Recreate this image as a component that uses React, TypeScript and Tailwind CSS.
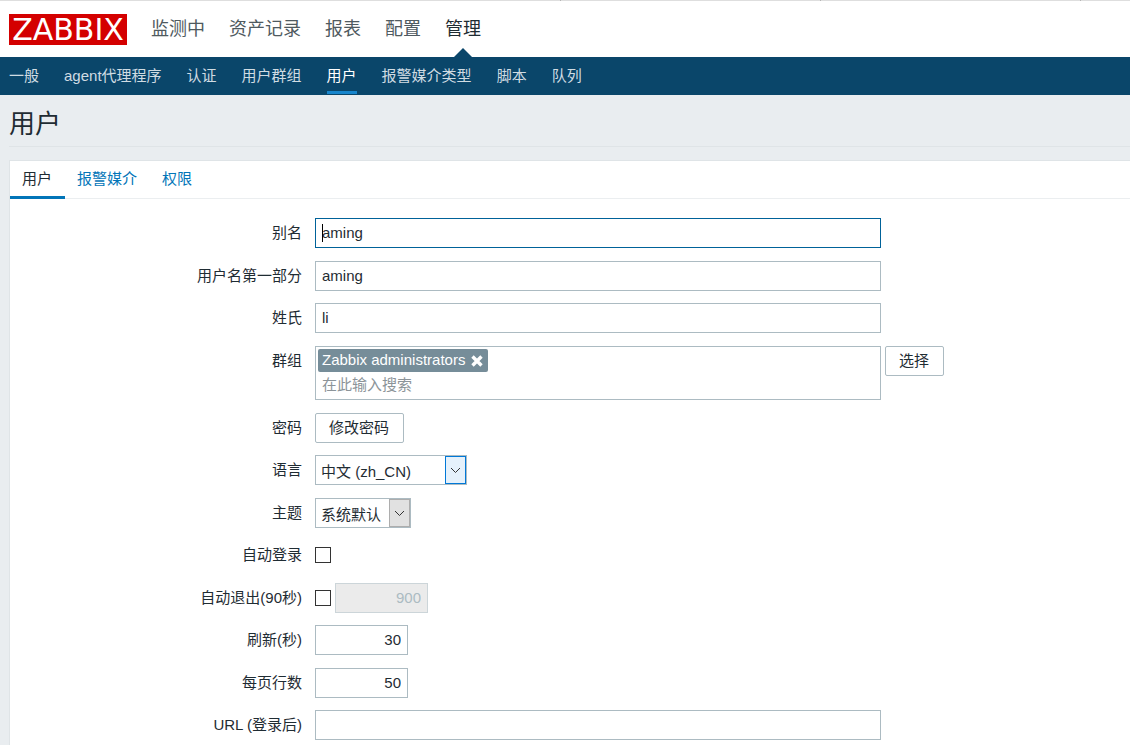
import React from "react";

const mainMenu = ["监测中", "资产记录", "报表", "配置", "管理"];
const subMenu = ["一般", "agent代理程序", "认证", "用户群组", "用户", "报警媒介类型", "脚本", "队列"];
const tabs = ["用户", "报警媒介", "权限"];

const fieldBase = "h-[30px] border px-1.5 pb-0.5 outline-none";
const textField = `${fieldBase} w-full max-w-[566px] border-[#acbbc2] bg-white focus:border-[#006299]`;
const numberField = `${fieldBase} w-[93px] border-[#acbbc2] bg-white text-right`;
const checkbox = "size-4 shrink-0 appearance-none border border-[#333333] bg-white checked:bg-[#0275b8]";
const button = "h-[30px] shrink-0 rounded-xs border border-[#acbbc2] bg-white pr-3.5 pl-[13px] leading-7";
const select =
  "block h-[30px] appearance-none border border-[#acbbc2] bg-white pt-1 pl-[5px] outline-none";

function Row({ label, id, children }: { label: string; id: string; children: React.ReactNode }) {
  return (
    <div className="grid grid-cols-[292px_1fr] gap-x-[13px] odd:pb-[13px] even:pb-3">
      <label htmlFor={id} className="pt-1 text-right leading-[22px]">
        {label}
      </label>
      <div className="flex min-h-[30px] items-start">{children}</div>
    </div>
  );
}

function Chevron({ active }: { active?: boolean }) {
  return (
    <span
      className={
        active
          ? "pointer-events-none absolute top-px right-px bottom-px flex w-[21px] items-center justify-center border border-[#0078d7] bg-[#e5f1fb]"
          : "pointer-events-none absolute top-px right-px bottom-px flex w-[21px] items-center justify-center border border-[#adadad] bg-[#e1e1e1]"
      }
    >
      <svg width="11" height="7" viewBox="0 0 11 7" fill="none" stroke="#333" strokeWidth="1">
        <path d="M1 1l4.500 4.500L10 1" />
      </svg>
    </span>
  );
}

export default function App() {
  return (
    <div className="min-h-screen overflow-x-hidden bg-[#e9edf0] font-['Liberation_Sans','Noto_Sans_CJK_SC',sans-serif] text-[15px] text-[#1f2c33]">
      <div className="flex h-px bg-[#dedede]">
        <span className="w-[561px] border-r border-[#b4b4b4]" />
        <span className="w-[260px] border-r border-[#b4b4b4]" />
        <span className="w-[260px] border-r border-[#b4b4b4]" />
      </div>
      <header className="flex h-14 items-center bg-white pl-[9px]">
        <a
          href="#home"
          className="flex h-[31px] w-[118px] items-center justify-center bg-[#d40000] font-['DejaVu_Sans',sans-serif] text-[30px] leading-[31px] text-white"
        >
          ZABBIX
        </a>
        <nav className="ml-6 flex h-full gap-6 text-[18px] leading-14">
          {mainMenu.map((item) => (
            <a
              key={item}
              href="#menu"
              className={item === "管理" ? "relative block text-[#1f2c33]" : "block text-[#4f5a60]"}
            >
              {item}
              {item === "管理" && (
                <span className="absolute bottom-0 left-1/2 -translate-x-1/2 border-x-9 border-b-9 border-x-transparent border-b-[#0a466a]" />
              )}
            </a>
          ))}
        </nav>
      </header>
      <nav className="flex h-[38px] gap-[25px] bg-[#0a466a] pl-[9px] leading-[38px] whitespace-nowrap">
        {subMenu.map((item) => (
          <a
            key={item}
            href="#section"
            className={
              item === "用户"
                ? "h-[37px] border-b-3 border-[#1785cc] text-white"
                : "h-[37px] text-[#d0dce3]"
            }
          >
            {item}
          </a>
        ))}
      </nav>

      <main className="pl-[9px]">
        <h1 className="mb-[13px] h-[52px] border-b border-[#dfe4e7] text-[26px] leading-[58px]">用户</h1>
        <div className="border-t border-l border-[#dfe4e7] bg-white">
          <div role="tablist" className="flex h-[38px] border-b border-[#ebeef0]">
            {tabs.map((tab, i) => (
              <button
                key={tab}
                type="button"
                role="tab"
                aria-selected={i === 0}
                className={
                  i === 0
                    ? "h-[38px] border-b-3 border-[#0275b8] pt-0.5 pr-[13px] pl-3"
                    : "h-[38px] border-b-3 border-transparent pt-0.5 pr-[13px] pl-3 text-[#0275b8]"
                }
              >
                {tab}
              </button>
            ))}
          </div>

          <form className="pt-[19px]">
            <fieldset>
              <Row label="别名" id="alias">
                <div className="relative w-full max-w-[566px]">
                  <input
                    id="alias"
                    defaultValue="aming"
                    className={`${fieldBase} w-full border-[#006299] bg-white`}
                  />
                  <span className="absolute top-1.5 left-[7px] h-[18px] w-px bg-black" />
                </div>
              </Row>
              <Row label="用户名第一部分" id="name">
                <input id="name" defaultValue="aming" className={textField} />
              </Row>
              <Row label="姓氏" id="surname">
                <input id="surname" defaultValue="li" className={textField} />
              </Row>
            </fieldset>
            <fieldset>
              <Row label="群组" id="groups">
                <div className="h-[54px] w-full max-w-[566px] border border-[#acbbc2] bg-white p-0.5">
                  <div className="flex h-[23px] w-[170px] items-center justify-between rounded-xs bg-[#768d99] pr-[5px] pl-1 text-white">
                    <span>Zabbix administrators</span>
                    <button type="button" aria-label="Zabbix administrators" className="block">
                      <svg width="12" height="12" viewBox="0 0 12 12" stroke="white" strokeWidth="3.400">
                        <path d="M1.500 1.500l9 9M10.500 1.500l-9 9" />
                      </svg>
                    </button>
                  </div>
                  <input
                    id="groups"
                    placeholder="在此输入搜索"
                    className="block h-6 w-full px-1 outline-none placeholder:text-[#8c9499]"
                  />
                </div>
                <button type="button" className={`${button} ml-1`}>
                  选择
                </button>
              </Row>
              <Row label="密码" id="password">
                <button id="password" type="button" className={button}>
                  修改密码
                </button>
              </Row>
              <Row label="语言" id="lang">
                <div className="relative">
                  <select id="lang" className={`${select} w-[152px]`}>
                    <option>中文 (zh_CN)</option>
                  </select>
                  <Chevron active />
                </div>
              </Row>
              <Row label="主题" id="theme">
                <div className="relative">
                  <select id="theme" className={`${select} w-24`}>
                    <option>系统默认</option>
                  </select>
                  <Chevron />
                </div>
              </Row>
              <Row label="自动登录" id="autologin">
                <div className="flex h-[30px] items-center">
                  <input id="autologin" type="checkbox" className={checkbox} />
                </div>
              </Row>
              <Row label="自动退出(90秒)" id="autologout">
                <div className="flex h-[30px] items-center gap-1">
                  <input id="autologout" type="checkbox" className={checkbox} />
                  <input
                    aria-label="自动退出"
                    defaultValue="900"
                    disabled
                    className={`${fieldBase} w-[93px] border-[#ccd5d9] bg-[#ebebeb] text-right text-[#acbbc2]`}
                  />
                </div>
              </Row>
              <Row label="刷新(秒)" id="refresh">
                <input id="refresh" defaultValue="30" className={numberField} />
              </Row>
              <Row label="每页行数" id="rows">
                <input id="rows" defaultValue="50" className={numberField} />
              </Row>
              <Row label="URL (登录后)" id="url">
                <input id="url" className={textField} />
              </Row>
            </fieldset>
          </form>
        </div>
      </main>
    </div>
  );
}
